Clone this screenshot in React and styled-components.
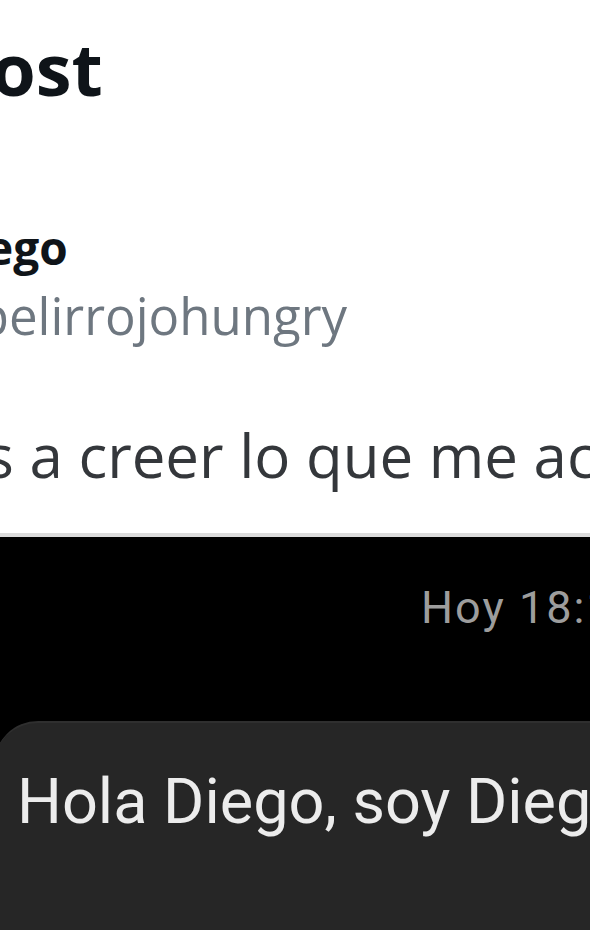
import React from 'react';
import styled, { createGlobalStyle } from 'styled-components';

const GlobalStyle = createGlobalStyle`
    html, body {
        margin: 0;
        padding: 0;
        background: #000;
    }
`;

const Page = styled.div`
    width: 590px;
    height: 930px;
    overflow: hidden;
    display: flex;
    flex-direction: column;
`;

const TweetPanel = styled.section`
    height: 533px;
    flex-shrink: 0;
    background: #fff;
    border-bottom: 4px solid #dcdcdc;
    font-family: "Open Sans", "Noto Sans", sans-serif;
    overflow: hidden;
`;

// text lines of the cropped screenshot: the start of each line sits left of the frame
const CutLine = styled.div`
    white-space: nowrap;
    margin-left: ${(p) => p.$shift}px;
    margin-top: ${(p) => p.$top}px;
`;

const Title = styled(CutLine)`
    font-size: 72px;
    line-height: 80px;
    font-weight: 700;
    color: #0f1419;
`;

const Name = styled(CutLine)`
    font-size: 46px;
    line-height: 54px;
    font-weight: 700;
    color: #0f1419;
`;

const Handle = styled(CutLine)`
    font-size: 51px;
    line-height: 58px;
    color: #6e7780;
`;

const Body = styled(CutLine)`
    font-size: 60px;
    line-height: 70px;
    color: #34373b;
`;

const ChatPanel = styled.section`
    flex: 1;
    display: flex;
    flex-direction: column;
    background: #000;
    font-family: Roboto, "Liberation Sans", sans-serif;
    padding-top: 46px;
`;

const Timestamp = styled.div`
    padding-left: 421px;
    font-size: 45px;
    line-height: 50px;
    letter-spacing: 2px;
    color: #9d9d9d;
    white-space: nowrap;
`;

const Bubble = styled.div`
    flex: 1;
    margin-top: 88px;
    margin-left: -6px;
    padding: 43px 0 0 23px;
    background: #262626;
    border-top: 2px solid #2f2f2f;
    border-radius: 44px 0 0 0;
    overflow: hidden;
`;

const Message = styled.div`
    font-size: 63px;
    line-height: 72px;
    color: #ececec;
    white-space: nowrap;
`;

export default function App() {
    return (
        <Page>
            <GlobalStyle />
            <TweetPanel>
                <Title $top={28} $shift={-54}>Post</Title>
                <Name $top={112} $shift={-62}>Diego</Name>
                <Handle $top={12} $shift={-68}>@pelirrojohungry</Handle>
                <Body $top={76} $shift={-190}>No vais a creer lo que me acaba de pasar</Body>
            </TweetPanel>
            <ChatPanel>
                <Timestamp>Hoy 18:14</Timestamp>
                <Bubble>
                    <Message>Hola Diego, soy Diego</Message>
                </Bubble>
            </ChatPanel>
        </Page>
    );
}
